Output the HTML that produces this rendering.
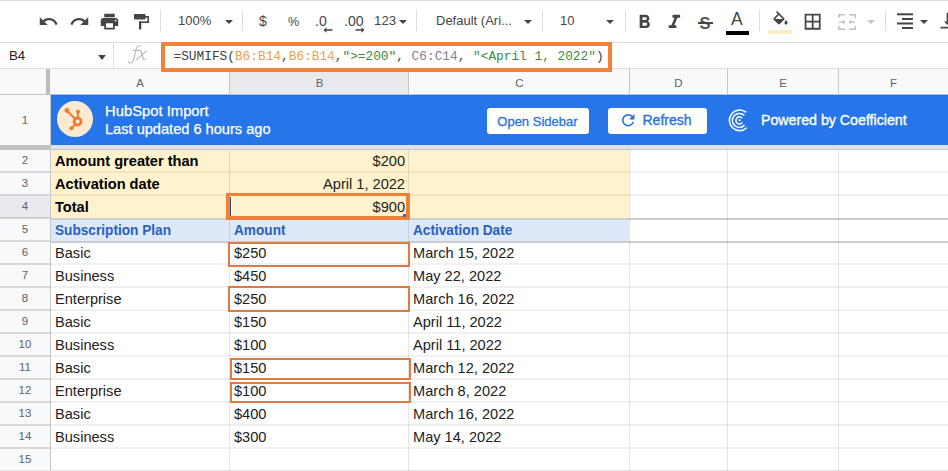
<!DOCTYPE html>
<html><head><meta charset="utf-8">
<style>
*{margin:0;padding:0;box-sizing:border-box}
html,body{width:948px;height:471px;overflow:hidden;background:#fff;font-family:"Liberation Sans",sans-serif;position:relative}
.a{position:absolute}
.ic{position:absolute;fill:#444746}
.sep{position:absolute;top:10px;width:1px;height:21px;background:#dadce0}
.tt{position:absolute;font-size:14px;color:#444746;line-height:16px;white-space:nowrap}
.dd{position:absolute;width:0;height:0;border-left:4px solid transparent;border-right:4px solid transparent;border-top:4px solid #444746}
.ch{position:absolute;top:71px;height:25px;font-size:11.5px;color:#5f6368;line-height:25px;text-align:center}
.rh{position:absolute;left:0;width:50px;height:22px;font-size:11.5px;color:#5f6368;line-height:21px;text-align:center}
.c{position:absolute;font-size:14.6px;line-height:23px;height:22px;color:#222;white-space:nowrap;overflow:hidden}
.ob{position:absolute;border:2px solid #de7b42}
</style></head><body>

<!-- toolbar -->
<div class="a" style="left:0;top:0;width:948px;height:1px;background:#dadce0"></div>
<div class="a" style="left:0;top:42px;width:948px;height:1px;background:#dadce0"></div>
<svg class="ic" style="left:38px;top:11px" width="21" height="21" viewBox="0 0 24 24"><path d="M12.5 8c-2.65 0-5.05.99-6.9 2.6L2 7v9h9l-3.62-3.62c1.39-1.16 3.16-1.88 5.12-1.88 3.54 0 6.55 2.31 7.6 5.5l2.37-.78C21.08 11.03 17.15 8 12.5 8z"/></svg>
<svg class="ic" style="left:68.5px;top:11px" width="21" height="21" viewBox="0 0 24 24"><path d="M18.4 10.6C16.55 8.99 14.15 8 11.5 8c-4.65 0-8.58 3.03-9.96 7.22L3.9 16c1.05-3.19 4.05-5.5 7.6-5.5 1.95 0 3.73.72 5.12 1.88L13 16h9V7l-3.6 3.6z"/></svg>
<svg class="ic" style="left:99.3px;top:11px" width="21" height="21" viewBox="0 0 24 24"><path d="M19 8H5c-1.66 0-3 1.34-3 3v6h4v4h12v-4h4v-6c0-1.66-1.34-3-3-3zm-3 11H8v-5h8v5zm3-7c-.55 0-1-.45-1-1s.45-1 1-1 1 .45 1 1-.45 1-1 1zm-1-9H6v4h12V3z"/></svg>
<svg class="a" style="left:126px;top:8px" width="30" height="26" viewBox="126 8 30 26"><g fill="#444746"><rect x="134" y="14" width="11.5" height="5.6" rx="1"/><rect x="145" y="16" width="4" height="1.6"/><rect x="147.4" y="16" width="1.6" height="7"/><rect x="139" y="21.4" width="10" height="1.6"/><rect x="139" y="21.4" width="2.3" height="8.1"/></g></svg>
<div class="sep" style="left:160px"></div>
<div class="tt" style="left:178px;top:13px;font-size:13px">100%</div>
<div class="dd" style="left:225px;top:20px"></div>
<div class="sep" style="left:242px"></div>
<div class="tt" style="left:259px;top:13px">$</div>
<div class="tt" style="left:288px;top:14px;font-size:12.5px">%</div>
<div class="tt" style="left:315px;top:13px">.0</div>
<svg class="a" style="left:323px;top:27px" width="10" height="6" viewBox="0 0 10 6"><path d="M0.5 3 L3.5 0.2 V2.2 H9.5 V3.8 H3.5 V5.8 Z" fill="#444746"/></svg>
<div class="tt" style="left:344px;top:13px">.00</div>
<svg class="a" style="left:355px;top:27px" width="10" height="6" viewBox="0 0 10 6"><path d="M9.5 3 L6.5 0.2 V2.2 H0.5 V3.8 H6.5 V5.8 Z" fill="#444746"/></svg>
<div class="tt" style="left:374px;top:13px;font-size:13.3px">123</div>
<div class="dd" style="left:399px;top:20px"></div>
<div class="sep" style="left:416px"></div>
<div class="tt" style="left:436px;top:13px;font-size:13px">Default (Ari...</div>
<div class="dd" style="left:524px;top:20px"></div>
<div class="sep" style="left:542px"></div>
<div class="tt" style="left:560px;top:13px;font-size:13px">10</div>
<div class="dd" style="left:606px;top:20px"></div>
<div class="sep" style="left:625px"></div>
<svg class="ic" style="left:632.5px;top:10.8px" width="22.8" height="22.8" viewBox="0 0 24 24"><path d="M15.6 10.79c.97-.67 1.65-1.77 1.65-2.79 0-2.26-1.75-4-4-4H7v14h7.04c2.09 0 3.710-1.7 3.71-3.79 0-1.52-.86-2.82-2.150-3.42zM10 6.5h3c.83 0 1.5.67 1.5 1.5s-.67 1.5-1.5 1.5h-3v-3zm3.5 9H10v-3h3.5c.83 0 1.5.67 1.5 1.5s-.67 1.5-1.5 1.5z"/></svg>
<svg class="ic" style="left:663.2px;top:10.8px" width="22.8" height="22.8" viewBox="0 0 24 24"><path d="M10 4v3h2.21l-3.42 8H6v3h8v-3h-2.21l3.42-8H18V4z"/></svg>
<div class="tt" style="left:699.5px;top:13.5px;font-size:16.5px;line-height:19px;font-weight:bold;color:#555">S</div>
<div class="a" style="left:698px;top:22px;width:15px;height:2px;background:#444746"></div>
<div class="tt" style="left:731px;top:9px;font-size:17.5px;line-height:20px">A</div>
<div class="a" style="left:726px;top:31px;width:23px;height:4px;background:#000"></div>
<div class="sep" style="left:759px"></div>
<svg class="ic" style="left:771px;top:11px" width="19" height="19" viewBox="0 0 24 24"><path d="M16.56 8.94L7.62 0 6.21 1.41l2.38 2.38-5.15 5.15c-.59.59-.59 1.54 0 2.12l5.5 5.5c.29.29.68.44 1.06.44s.77-.15 1.06-.44l5.5-5.5c.59-.58.59-1.53 0-2.12zM5.21 10L10 5.21 14.79 10H5.21zM19 11.5s-2 2.17-2 3.5c0 1.1.9 2 2 2s2-.9 2-2c0-1.33-2-3.5-2-3.5z"/></svg>
<div class="a" style="left:768px;top:30px;width:24px;height:4px;background:#fdedc2"></div>
<svg class="ic" style="left:802.4px;top:10.6px" width="21.3" height="21.3" viewBox="0 0 24 24"><path d="M3 3v18h18V3H3zm8 16H5v-6h6v6zm0-8H5V5h6v6zm8 8h-6v-6h6v6zm0-8h-6V5h6v6z"/></svg>
<svg class="a" style="left:838px;top:14px" width="18" height="16" viewBox="0 0 18 16"><g fill="#c4c4c4">
<rect x="0" y="0" width="7" height="1.6"/><rect x="0" y="0" width="1.6" height="4"/><rect x="0" y="12" width="1.6" height="4"/><rect x="0" y="14.4" width="7" height="1.6"/>
<rect x="11" y="0" width="7" height="1.6"/><rect x="16.4" y="0" width="1.6" height="4"/><rect x="16.4" y="12" width="1.6" height="4"/><rect x="11" y="14.4" width="7" height="1.6"/>
<path d="M1 7.2h4V5.6l2.6 2.4L5 10.4V8.8H1z"/><path d="M17 7.2h-4V5.6l-2.6 2.4 2.6 2.4V8.8h4z"/></g></svg>
<div class="dd" style="left:867px;top:20px;border-top-color:#c8c8c8"></div>
<div class="sep" style="left:885px"></div>
<svg class="a" style="left:897px;top:13px" width="16" height="17" viewBox="0 0 16 17"><g fill="#444746"><rect x="0" y="0.3" width="16" height="2"/><rect x="5" y="5" width="11" height="2"/><rect x="0" y="9.5" width="16" height="2"/><rect x="5" y="14" width="11" height="2"/></g></svg>
<div class="dd" style="left:920px;top:20px"></div>
<svg class="ic" style="left:937px;top:10px" width="21" height="21" viewBox="0 0 24 24"><path d="M16 13h-3V3h-2v10H8l4 4 4-4zM4 19v2h16v-2H4z"/></svg>

<div class="a" style="left:0;top:69px;width:948px;height:26px;background:#f8f9fa"></div>
<div class="a" style="left:230px;top:69px;width:178px;height:26px;background:#e8eaed"></div>
<div class="a" style="left:0;top:94px;width:948px;height:1px;background:#c7c7c7"></div>
<div class="a" style="left:46px;top:69px;width:4px;height:26px;background:#bdbdbd"></div>
<div class="ch" style="left:51px;width:178px">A</div>
<div class="ch" style="left:230px;width:179px">B</div>
<div class="ch" style="left:410px;width:219px">C</div>
<div class="ch" style="left:630px;width:97px">D</div>
<div class="ch" style="left:728px;width:110px">E</div>
<div class="ch" style="left:839px;width:109px">F</div>
<div class="a" style="left:229px;top:69px;width:1px;height:25px;background:#c7c7c7"></div>
<div class="a" style="left:408px;top:69px;width:1px;height:25px;background:#c7c7c7"></div>
<div class="a" style="left:629px;top:69px;width:1px;height:25px;background:#c7c7c7"></div>
<div class="a" style="left:727px;top:69px;width:1px;height:25px;background:#c7c7c7"></div>
<div class="a" style="left:838px;top:69px;width:1px;height:25px;background:#c7c7c7"></div>
<!-- formula bar -->
<div class="a" style="left:0;top:68px;width:948px;height:1px;background:#dadce0"></div>
<div class="a" style="left:9px;top:48px;font-size:13.3px;line-height:16px;color:#202124">B4</div>
<div class="a" style="left:98px;top:55px;width:0;height:0;border-left:4px solid transparent;border-right:4px solid transparent;border-top:5px solid #444746"></div>
<div class="a" style="left:113px;top:43px;width:1px;height:25px;background:#dadce0"></div>
<svg class="a" style="left:124px;top:43px" width="26" height="24" viewBox="124 43 26 24"><g stroke="#bbbdc0" stroke-width="1.2" fill="none" stroke-linecap="round"><path d="M140.5 46.3 C139 45.6 137 46 136.4 48.5 L133.6 59.5 C133 62.5 131 64 128.2 62.2"/><path d="M133.2 50.3 H139.6"/><path d="M139.6 50.4 C141 50.6 141.5 52 142 54 L143 58 C143.4 59.5 144.5 59.8 145.5 59.2"/><path d="M146.6 50.8 L136.6 59.6"/></g></svg>
<div class="a" style="left:161px;top:42px;width:451px;height:30px;border:4px solid #f4803a;background:#fff"></div>
<div class="a" style="left:173.5px;top:48.5px;font-family:'Liberation Mono',monospace;font-size:12.8px;line-height:16px;color:#3c4043;white-space:pre">=SUMIFS(<span style="color:#f0a04b">B6:B14</span>,<span style="color:#f0a04b">B6:B14</span>,<span style="color:#3a8a3f">"&gt;=200"</span>, <span style="color:#8d7b97">C6:C14</span>, <span style="color:#3a8a3f">"&lt;April 1, 2022"</span>)</div>

<div class="a" style="left:0;top:95px;width:50px;height:376px;background:#f8f9fa"></div>
<div class="a" style="left:0;top:196px;width:50px;height:22px;background:#e8eaed"></div>
<div class="a" style="left:50px;top:95px;width:1px;height:376px;background:#c7c7c7"></div>
<div class="a" style="left:51px;top:150px;width:578px;height:68px;background:#fff2cc"></div>
<div class="a" style="left:51px;top:219px;width:578px;height:22px;background:#dde9f8"></div>
<div class="a" style="left:51px;top:171px;width:897px;height:2px;background:rgba(0,0,0,0.055)"></div>
<div class="a" style="left:0;top:171px;width:50px;height:2px;background:rgba(0,0,0,0.13)"></div>
<div class="a" style="left:51px;top:194px;width:897px;height:2px;background:rgba(0,0,0,0.055)"></div>
<div class="a" style="left:0;top:194px;width:50px;height:2px;background:rgba(0,0,0,0.13)"></div>
<div class="a" style="left:51px;top:218px;width:897px;height:2px;background:#cdcdcd"></div>
<div class="a" style="left:0;top:217px;width:50px;height:2px;background:rgba(0,0,0,0.13)"></div>
<div class="a" style="left:51px;top:241px;width:897px;height:2px;background:#cdcdcd"></div>
<div class="a" style="left:0;top:240px;width:50px;height:2px;background:rgba(0,0,0,0.13)"></div>
<div class="a" style="left:51px;top:263px;width:897px;height:2px;background:rgba(0,0,0,0.055)"></div>
<div class="a" style="left:0;top:263px;width:50px;height:2px;background:rgba(0,0,0,0.13)"></div>
<div class="a" style="left:51px;top:286px;width:897px;height:2px;background:rgba(0,0,0,0.055)"></div>
<div class="a" style="left:0;top:286px;width:50px;height:2px;background:rgba(0,0,0,0.13)"></div>
<div class="a" style="left:51px;top:309px;width:897px;height:2px;background:rgba(0,0,0,0.055)"></div>
<div class="a" style="left:0;top:309px;width:50px;height:2px;background:rgba(0,0,0,0.13)"></div>
<div class="a" style="left:51px;top:332px;width:897px;height:2px;background:rgba(0,0,0,0.055)"></div>
<div class="a" style="left:0;top:332px;width:50px;height:2px;background:rgba(0,0,0,0.13)"></div>
<div class="a" style="left:51px;top:355px;width:897px;height:2px;background:rgba(0,0,0,0.055)"></div>
<div class="a" style="left:0;top:355px;width:50px;height:2px;background:rgba(0,0,0,0.13)"></div>
<div class="a" style="left:51px;top:378px;width:897px;height:2px;background:rgba(0,0,0,0.055)"></div>
<div class="a" style="left:0;top:378px;width:50px;height:2px;background:rgba(0,0,0,0.13)"></div>
<div class="a" style="left:51px;top:401px;width:897px;height:2px;background:rgba(0,0,0,0.055)"></div>
<div class="a" style="left:0;top:401px;width:50px;height:2px;background:rgba(0,0,0,0.13)"></div>
<div class="a" style="left:51px;top:424px;width:897px;height:2px;background:rgba(0,0,0,0.055)"></div>
<div class="a" style="left:0;top:424px;width:50px;height:2px;background:rgba(0,0,0,0.13)"></div>
<div class="a" style="left:51px;top:447px;width:897px;height:2px;background:rgba(0,0,0,0.055)"></div>
<div class="a" style="left:0;top:447px;width:50px;height:2px;background:rgba(0,0,0,0.13)"></div>
<div class="a" style="left:0;top:470px;width:948px;height:1px;background:#e6e6e6"></div>
<div class="a" style="left:229px;top:150px;width:1px;height:321px;background:rgba(0,0,0,0.1)"></div>
<div class="a" style="left:408px;top:150px;width:1px;height:321px;background:rgba(0,0,0,0.1)"></div>
<div class="a" style="left:629px;top:150px;width:1px;height:321px;background:rgba(0,0,0,0.1)"></div>
<div class="a" style="left:727px;top:150px;width:1px;height:321px;background:rgba(0,0,0,0.1)"></div>
<div class="a" style="left:838px;top:150px;width:1px;height:321px;background:rgba(0,0,0,0.1)"></div>
<div class="a" style="left:51px;top:145px;width:897px;height:4px;background:#dfe3e8"></div>
<div class="a" style="left:51px;top:149px;width:897px;height:1px;background:#c6c6c6"></div>
<div class="a" style="left:0;top:145px;width:50px;height:5px;background:#c2c2c2"></div>
<!-- banner -->
<div class="a" style="left:51px;top:95px;width:897px;height:50px;background:#2676ea"></div>
<div class="a" style="left:56.5px;top:101px;width:36px;height:36px;border-radius:50%;background:#fdeacf"></div>
<svg class="a" style="left:56px;top:101px" width="36" height="36" viewBox="0 0 36 36">
 <g stroke="#ef7b2f" fill="none" stroke-linecap="round">
  <circle cx="21.6" cy="20.6" r="3.5" stroke-width="2.8"/>
  <line x1="21.8" y1="16.5" x2="22" y2="11" stroke-width="2"/>
  <line x1="18.8" y1="17.8" x2="11" y2="9.6" stroke-width="2"/>
  <line x1="19.2" y1="23.4" x2="15.4" y2="27.3" stroke-width="2"/>
 </g>
 <g fill="#ef7b2f"><circle cx="22" cy="10.8" r="2"/><circle cx="10.9" cy="9.5" r="2.4"/><circle cx="15.4" cy="27.3" r="2"/></g>
</svg>
<div class="a" style="left:105px;top:102.5px;font-size:14.8px;line-height:17px;color:#fff;-webkit-text-stroke:0.25px #fff;white-space:nowrap">HubSpot Import</div>
<div class="a" style="left:105px;top:120.5px;font-size:14.6px;line-height:17px;color:#fff;-webkit-text-stroke:0.25px #fff;white-space:nowrap">Last updated 6 hours ago</div>
<div class="a" style="left:487px;top:108px;width:102px;height:26px;border-radius:3px;background:#fff"></div>
<div class="a" style="left:497.3px;top:112.5px;font-size:13px;line-height:17px;color:#2a72dc;-webkit-text-stroke:0.3px #2a72dc;white-space:nowrap">Open Sidebar</div>
<div class="a" style="left:608px;top:108px;width:99px;height:26px;border-radius:3px;background:#fff"></div>
<svg class="a" style="left:618.8px;top:110.6px;fill:#2a72dc" width="18.5" height="18.5" viewBox="0 0 24 24"><path d="M17.65 6.35C16.2 4.9 14.21 4 12 4c-4.42 0-7.99 3.58-7.99 8s3.57 8 7.99 8c3.73 0 6.84-2.55 7.73-6h-2.08c-.82 2.33-3.04 4-5.65 4-3.31 0-6-2.69-6-6s2.69-6 6-6c1.66 0 3.14.69 4.22 1.78L13 11h7V4l-2.35 2.35z"/></svg>
<div class="a" style="left:642.5px;top:112px;font-size:14px;line-height:17px;color:#2a72dc;-webkit-text-stroke:0.35px #2a72dc;white-space:nowrap">Refresh</div>
<svg class="a" style="left:727px;top:107px" width="26" height="26" viewBox="0 0 26 26">
 <g stroke="#fff" stroke-width="1.5" fill="none">
  <path d="M19.2 5.4 A10.3 10.3 0 1 0 19.8 20.8"/>
  <path d="M17.4 8.6 A7 7 0 1 0 17.6 18"/>
  <path d="M15.2 11.1 A3.6 3.6 0 1 0 15.4 15.6"/>
 </g>
 <circle cx="12.6" cy="13.3" r="1.1" fill="#fff"/>
</svg>
<div class="a" style="left:761px;top:112px;font-size:14.2px;line-height:17px;color:#fff;-webkit-text-stroke:0.35px #fff;white-space:nowrap">Powered by Coefficient</div>

<div class="a" style="left:51px;top:94px;width:897px;height:1px;background:#a9c6ee"></div>
<div class="a" style="left:51px;top:95px;width:897px;height:1px;background:#2470dc"></div>
<div class="rh" style="top:110px">1</div>
<div class="rh" style="top:150px">2</div>
<div class="rh" style="top:173px">3</div>
<div class="rh" style="top:196px">4</div>
<div class="rh" style="top:219px">5</div>
<div class="rh" style="top:242px">6</div>
<div class="rh" style="top:265px">7</div>
<div class="rh" style="top:288px">8</div>
<div class="rh" style="top:311px">9</div>
<div class="rh" style="top:334px">10</div>
<div class="rh" style="top:357px">11</div>
<div class="rh" style="top:380px">12</div>
<div class="rh" style="top:403px">13</div>
<div class="rh" style="top:426px">14</div>
<div class="rh" style="top:449px">15</div>
<div class="c" style="left:55px;top:150px;font-weight:bold;color:#000">Amount greater than</div>
<div class="c" style="left:230px;width:175px;text-align:right;top:150px;">$200</div>
<div class="c" style="left:55px;top:173px;font-weight:bold;color:#000">Activation date</div>
<div class="c" style="left:230px;width:175px;text-align:right;top:173px;">April 1, 2022</div>
<div class="c" style="left:55px;top:196px;font-weight:bold;color:#000">Total</div>
<div class="c" style="left:230px;width:175px;text-align:right;top:196px;">$900</div>
<div class="c" style="left:55px;top:219px;font-weight:bold;color:#2a5fc6;transform:scaleX(0.935);transform-origin:0 0">Subscription Plan</div>
<div class="c" style="left:234px;top:219px;font-weight:bold;color:#2a5fc6;transform:scaleX(0.935);transform-origin:0 0">Amount</div>
<div class="c" style="left:412.5px;top:219px;font-weight:bold;color:#2a5fc6;transform:scaleX(0.935);transform-origin:0 0">Activation Date</div>
<div class="c" style="left:55px;top:242px;">Basic</div>
<div class="c" style="left:234px;top:242px;">$250</div>
<div class="c" style="left:413px;top:242px">March 15, 2022</div>
<div class="c" style="left:55px;top:265px;">Business</div>
<div class="c" style="left:234px;top:265px;">$450</div>
<div class="c" style="left:413px;top:265px">May 22, 2022</div>
<div class="c" style="left:55px;top:288px;">Enterprise</div>
<div class="c" style="left:234px;top:288px;">$250</div>
<div class="c" style="left:413px;top:288px">March 16, 2022</div>
<div class="c" style="left:55px;top:311px;">Basic</div>
<div class="c" style="left:234px;top:311px;">$150</div>
<div class="c" style="left:413px;top:311px">April 11, 2022</div>
<div class="c" style="left:55px;top:334px;">Business</div>
<div class="c" style="left:234px;top:334px;">$100</div>
<div class="c" style="left:413px;top:334px">April 11, 2022</div>
<div class="c" style="left:55px;top:357px;">Basic</div>
<div class="c" style="left:234px;top:357px;">$150</div>
<div class="c" style="left:413px;top:357px">March 12, 2022</div>
<div class="c" style="left:55px;top:380px;">Enterprise</div>
<div class="c" style="left:234px;top:380px;">$100</div>
<div class="c" style="left:413px;top:380px">March 8, 2022</div>
<div class="c" style="left:55px;top:403px;">Basic</div>
<div class="c" style="left:234px;top:403px;">$400</div>
<div class="c" style="left:413px;top:403px">March 16, 2022</div>
<div class="c" style="left:55px;top:426px;">Business</div>
<div class="c" style="left:234px;top:426px;">$300</div>
<div class="c" style="left:413px;top:426px">May 14, 2022</div>
<div class="a" style="left:226px;top:193px;width:184px;height:27px;border:4px solid #f07f38;border-top-width:3.5px"></div>
<div class="a" style="left:230px;top:197px;width:1px;height:19px;background:#2c4f86"></div>
<div class="a" style="left:403px;top:214px;width:3px;height:3px;background:#1a73e8"></div>
<div class="ob" style="left:228px;top:242px;width:182px;height:25px"></div>
<div class="ob" style="left:228px;top:286px;width:182px;height:25.5px"></div>
<div class="ob" style="left:230px;top:358px;width:181px;height:22px"></div>
<div class="ob" style="left:230px;top:382px;width:181px;height:21px"></div>
</body></html>
